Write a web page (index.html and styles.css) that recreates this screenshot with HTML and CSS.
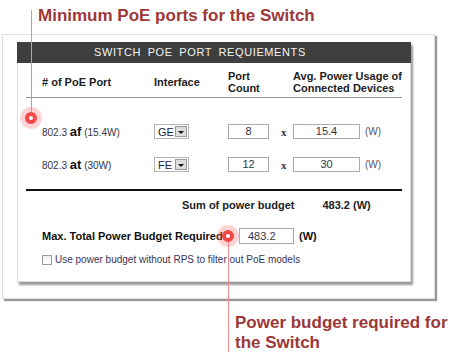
FILE: index.html
```html
<!DOCTYPE html>
<html lang="en">
<head>
  <meta charset="UTF-8" />
  <title>Switch PoE Port Requirements</title>
  <link rel="stylesheet" href="styles.css">
</head>
<body>
  <div class="note note-top">Minimum PoE ports for the Switch</div>

  <div class="frame">
    <div class="panel">
      <div class="panel-head">SWITCH POE PORT REQUIEMENTS</div>

      <div class="grid heads">
        <div>#&nbsp;of PoE Port</div>
        <div>Interface</div>
        <div>Port<br>Count</div>
        <div></div>
        <div class="wide">Avg. Power Usage of<br>Connected Devices</div>
      </div>

      <div class="grid row first">
        <div class="std">802.3 <b>af</b> (15.4W)</div>
        <div><span class="select">GE<span class="drop"></span></span></div>
        <div><span class="field short">8</span></div>
        <div class="times">x</div>
        <div><span class="field long">15.4</span></div>
        <div class="unit">(W)</div>
      </div>

      <div class="grid row">
        <div class="std">802.3 <b>at</b> (30W)</div>
        <div><span class="select">FE<span class="drop"></span></span></div>
        <div><span class="field short">12</span></div>
        <div class="times">x</div>
        <div><span class="field long">30</span></div>
        <div class="unit">(W)</div>
      </div>

      <div class="rule"></div>

      <div class="sum">
        <span>Sum of power budget</span>
        <span>483.2 (W)</span>
      </div>

      <div class="total">
        <span class="total-label">Max. Total Power Budget Required</span>
        <span class="field budget">483.2</span>
        <span class="total-unit">(W)</span>
      </div>

      <label class="check">
        <span class="box"></span>
        Use power budget without RPS to filter out PoE models
      </label>
    </div>
  </div>

  <div class="note note-bottom">Power budget required for<br>the Switch</div>

  <div class="pin pin-top"></div>
  <div class="pin pin-bottom"></div>
</body>
</html>
```

FILE: styles.css
```css
body {
  margin: 0;
  background: #fff;
  font-family: "Liberation Sans", Arial, sans-serif;
  color: #333;
  position: relative;
  width: 460px;
  height: 362px;
  overflow: hidden;
}

.note {
  color: #9c3838;
  font-weight: bold;
  font-size: 17px;
  line-height: 20px;
}

.note-top {
  padding: 6px 0 0 38px;
}

.note-bottom {
  padding: 14px 0 0 235px;
}

.frame {
  margin: 8px 0 0 2px;
  width: 433px;
  height: 265px;
  border: 1px solid #ddd;
  box-shadow: 2px 2px 1px #999;
  padding: 7px 0 0 14px;
  box-sizing: border-box;
  background: #fff;
}

.panel {
  width: 394px;
  height: 240px;
  box-sizing: border-box;
  border: 1px solid #ddd;
  border-top: none;
  box-shadow: 2px 3px 2px #999;
  background: #fff;
}

.panel-head {
  background: #3e3e3e;
  color: #f4f4f4;
  height: 21px;
  line-height: 21px;
  font-size: 11px;
  letter-spacing: 0.6px;
  word-spacing: 3px;
  padding-left: 77px;
  margin: 0 -1px;
}

.grid {
  display: grid;
  grid-template-columns: 112px 74px 53px 12px 72px auto;
  align-items: center;
  margin: 0 8px;
  padding-left: 16px;
}

.heads {
  padding-top: 7px;
  padding-bottom: 3px;
  border-bottom: 1px solid #999;
  font-weight: bold;
  font-size: 11px;
  line-height: 12px;
  color: #222;
}

.heads .wide {
  white-space: nowrap;
}

.row {
  height: 15px;
  margin-top: 18px;
  font-size: 10px;
  color: #334;
}

.row.first {
  margin-top: 26px;
}

.std b {
  font-size: 13px;
  color: #111;
}

.select {
  display: flex;
  align-items: center;
  justify-content: space-between;
  width: 35px;
  height: 15px;
  box-sizing: border-box;
  border: 1px solid #b5b5b5;
  padding: 0 1px 0 3px;
  font-size: 11px;
  color: #224;
  background: #fff;
}

.drop {
  width: 12px;
  height: 11px;
  box-sizing: border-box;
  border: 1px solid #999;
  background: #ddd;
  position: relative;
}

.drop::after {
  content: "";
  position: absolute;
  left: 2px;
  top: 4px;
  border-left: 3px solid transparent;
  border-right: 3px solid transparent;
  border-top: 3px solid #111;
}

.field {
  display: block;
  height: 15px;
  box-sizing: border-box;
  border: 1px solid #aaa;
  text-align: center;
  line-height: 13px;
  font-size: 11px;
  color: #334;
  background: #fff;
}

.short {
  width: 41px;
}

.long {
  width: 67px;
}

.times {
  font-family: "Liberation Serif", serif;
  font-weight: bold;
  font-size: 11px;
}

.unit {
  color: #556;
  font-size: 10px;
}

.rule {
  margin: 17px 8px 0;
  height: 2px;
  background: #111;
}

.sum {
  display: flex;
  gap: 28px;
  padding-left: 164px;
  margin-top: 7px;
  line-height: 14px;
  font-size: 11px;
  font-weight: bold;
  color: #222;
}

.total {
  display: flex;
  align-items: center;
  margin-top: 16px;
  padding-left: 24px;
  font-size: 11px;
  font-weight: bold;
  color: #111;
}

.total-label {
  width: 197px;
}

.budget {
  width: 55px;
  height: 16px;
  line-height: 14px;
  text-align: left;
  padding-left: 8px;
  font-weight: normal;
}

.total-unit {
  margin-left: 5px;
}

.check {
  display: flex;
  align-items: center;
  gap: 3px;
  margin-top: 10px;
  padding-left: 24px;
  line-height: 12px;
  font-size: 10px;
  color: #3a3358;
}

.box {
  width: 10px;
  height: 10px;
  box-sizing: border-box;
  border: 1px solid #999;
  background: linear-gradient(#eee, #fff);
}

.pin {
  position: absolute;
  width: 1px;
  background: #f08a8a;
}

.pin-top {
  left: 31px;
  top: 10px;
  height: 108px;
}

.pin-bottom {
  left: 228px;
  top: 236px;
  height: 116px;
}

.pin::after {
  content: "";
  position: absolute;
  width: 4px;
  height: 4px;
  border-radius: 50%;
  background: #fff;
  border: 4px solid #f04848;
  box-shadow: 0 0 0 5px rgba(248, 110, 110, 0.3);
}

.pin-top::after {
  left: -6px;
  bottom: -6px;
}

.pin-bottom::after {
  left: -6px;
  top: -6px;
}
```
